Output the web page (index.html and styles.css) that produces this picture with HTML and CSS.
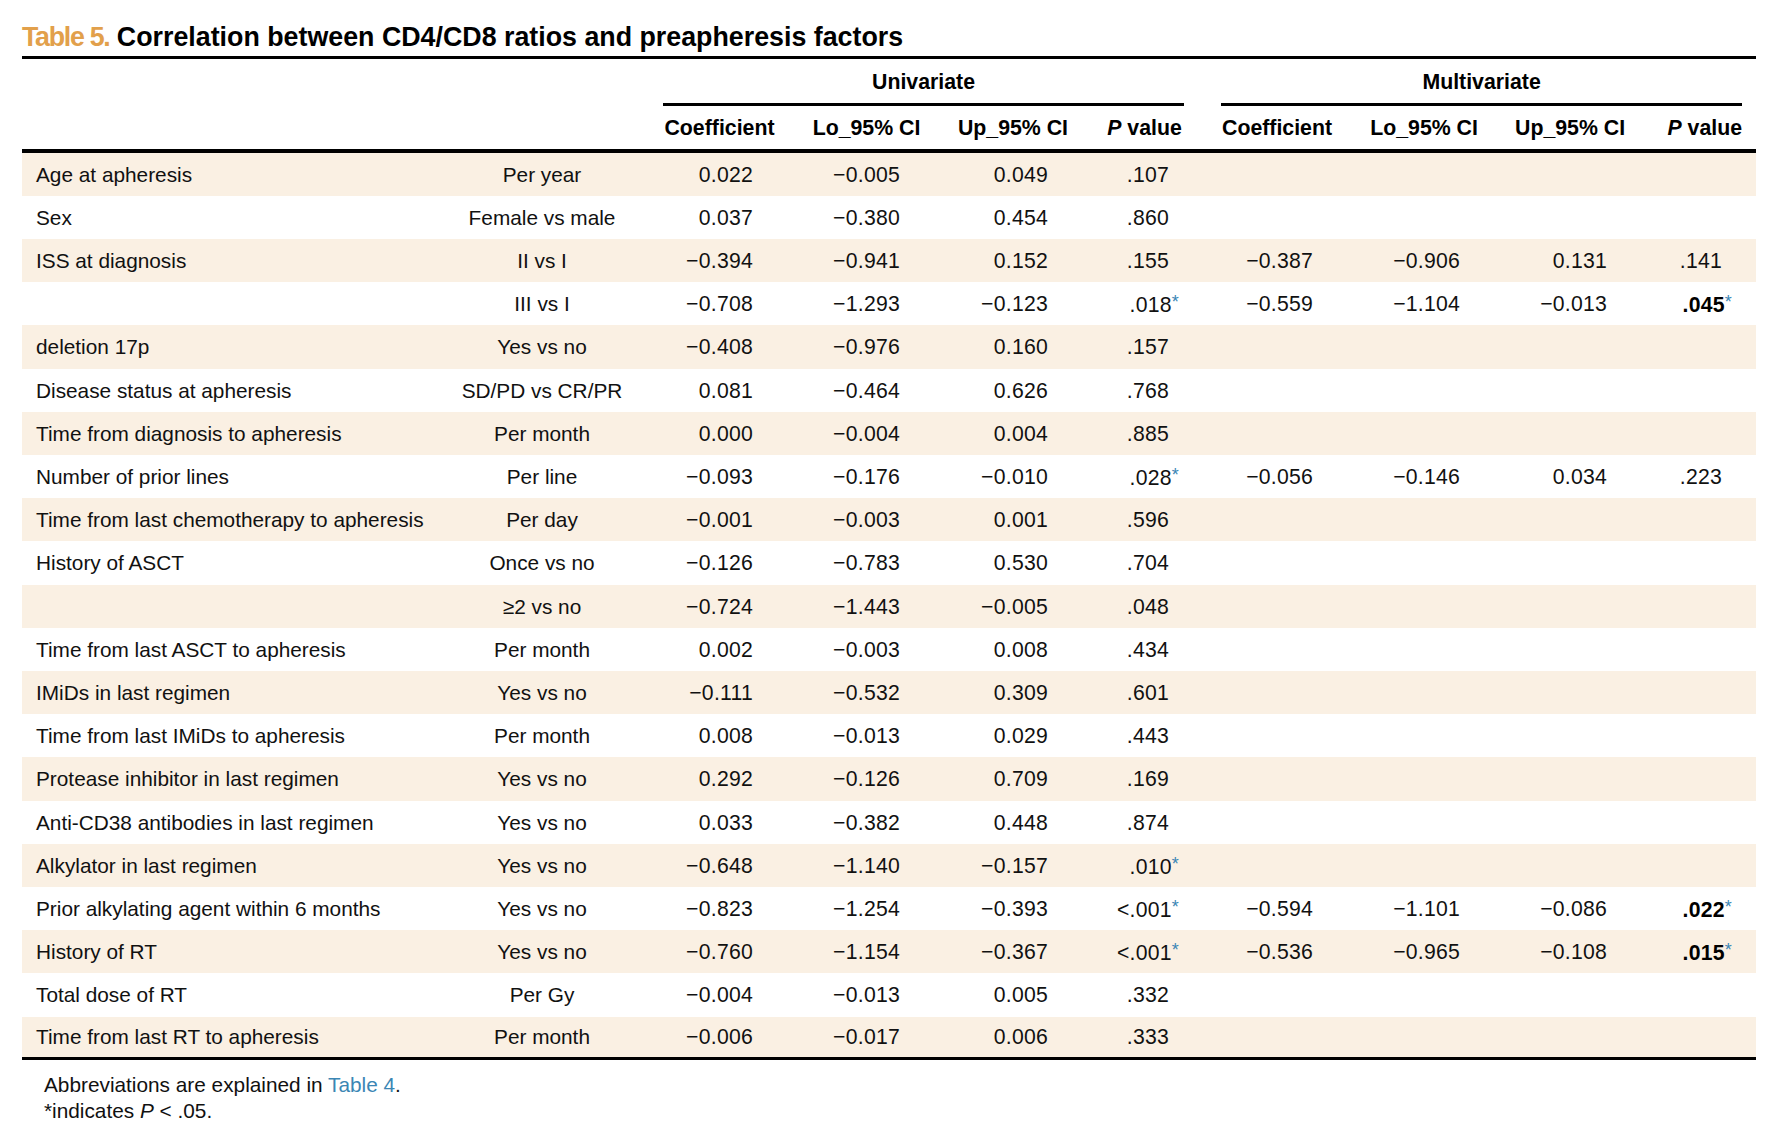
FILE: index.html
```html
<!DOCTYPE html>
<html lang="en">
<head>
<meta charset="utf-8">
<title>Table 5</title>
<link rel="stylesheet" href="styles.css">
</head>
<body>
<div class="page">
  <div class="caption"><span class="label">Table 5.</span> Correlation between CD4/CD8 ratios and preapheresis factors</div>
  <table class="data">
    <colgroup>
      <col class="w1"><col class="w2"><col class="w3"><col class="w4"><col class="w5"><col class="w6"><col class="w7"><col class="w8"><col class="w9"><col class="w10">
    </colgroup>
    <thead>
      <tr class="grp">
        <th></th><th></th>
        <th colspan="4" class="g-uni"><div class="gline">Univariate</div></th>
        <th colspan="4" class="g-multi"><div class="gline">Multivariate</div></th>
      </tr>
      <tr class="cols">
        <th></th><th></th>
        <th>Coefficient</th><th>Lo_95% CI</th><th>Up_95% CI</th><th><i>P</i> value</th>
        <th>Coefficient</th><th>Lo_95% CI</th><th>Up_95% CI</th><th class="last"><i>P</i> value</th>
      </tr>
    </thead>
    <tbody>
      <tr><td>Age at apheresis</td><td>Per year</td><td class="n3">0.022</td><td class="n4">−0.005</td><td class="n5">0.049</td><td class="n6">.107</td><td></td><td></td><td></td><td></td></tr>
      <tr><td>Sex</td><td>Female vs male</td><td class="n3">0.037</td><td class="n4">−0.380</td><td class="n5">0.454</td><td class="n6">.860</td><td></td><td></td><td></td><td></td></tr>
      <tr><td>ISS at diagnosis</td><td>II vs I</td><td class="n3">−0.394</td><td class="n4">−0.941</td><td class="n5">0.152</td><td class="n6">.155</td><td class="n7">−0.387</td><td class="n8">−0.906</td><td class="n9">0.131</td><td class="n10">.141</td></tr>
      <tr><td></td><td>III vs I</td><td class="n3">−0.708</td><td class="n4">−1.293</td><td class="n5">−0.123</td><td class="n6">.018<span class="star">*</span></td><td class="n7">−0.559</td><td class="n8">−1.104</td><td class="n9">−0.013</td><td class="n10"><b>.045</b><span class="star">*</span></td></tr>
      <tr><td>deletion 17p</td><td>Yes vs no</td><td class="n3">−0.408</td><td class="n4">−0.976</td><td class="n5">0.160</td><td class="n6">.157</td><td></td><td></td><td></td><td></td></tr>
      <tr><td>Disease status at apheresis</td><td>SD/PD vs CR/PR</td><td class="n3">0.081</td><td class="n4">−0.464</td><td class="n5">0.626</td><td class="n6">.768</td><td></td><td></td><td></td><td></td></tr>
      <tr><td>Time from diagnosis to apheresis</td><td>Per month</td><td class="n3">0.000</td><td class="n4">−0.004</td><td class="n5">0.004</td><td class="n6">.885</td><td></td><td></td><td></td><td></td></tr>
      <tr><td>Number of prior lines</td><td>Per line</td><td class="n3">−0.093</td><td class="n4">−0.176</td><td class="n5">−0.010</td><td class="n6">.028<span class="star">*</span></td><td class="n7">−0.056</td><td class="n8">−0.146</td><td class="n9">0.034</td><td class="n10">.223</td></tr>
      <tr><td>Time from last chemotherapy to apheresis</td><td>Per day</td><td class="n3">−0.001</td><td class="n4">−0.003</td><td class="n5">0.001</td><td class="n6">.596</td><td></td><td></td><td></td><td></td></tr>
      <tr><td>History of ASCT</td><td>Once vs no</td><td class="n3">−0.126</td><td class="n4">−0.783</td><td class="n5">0.530</td><td class="n6">.704</td><td></td><td></td><td></td><td></td></tr>
      <tr><td></td><td>≥2 vs no</td><td class="n3">−0.724</td><td class="n4">−1.443</td><td class="n5">−0.005</td><td class="n6">.048</td><td></td><td></td><td></td><td></td></tr>
      <tr><td>Time from last ASCT to apheresis</td><td>Per month</td><td class="n3">0.002</td><td class="n4">−0.003</td><td class="n5">0.008</td><td class="n6">.434</td><td></td><td></td><td></td><td></td></tr>
      <tr><td>IMiDs in last regimen</td><td>Yes vs no</td><td class="n3">−0.111</td><td class="n4">−0.532</td><td class="n5">0.309</td><td class="n6">.601</td><td></td><td></td><td></td><td></td></tr>
      <tr><td>Time from last IMiDs to apheresis</td><td>Per month</td><td class="n3">0.008</td><td class="n4">−0.013</td><td class="n5">0.029</td><td class="n6">.443</td><td></td><td></td><td></td><td></td></tr>
      <tr><td>Protease inhibitor in last regimen</td><td>Yes vs no</td><td class="n3">0.292</td><td class="n4">−0.126</td><td class="n5">0.709</td><td class="n6">.169</td><td></td><td></td><td></td><td></td></tr>
      <tr><td>Anti-CD38 antibodies in last regimen</td><td>Yes vs no</td><td class="n3">0.033</td><td class="n4">−0.382</td><td class="n5">0.448</td><td class="n6">.874</td><td></td><td></td><td></td><td></td></tr>
      <tr><td>Alkylator in last regimen</td><td>Yes vs no</td><td class="n3">−0.648</td><td class="n4">−1.140</td><td class="n5">−0.157</td><td class="n6">.010<span class="star">*</span></td><td></td><td></td><td></td><td></td></tr>
      <tr><td>Prior alkylating agent within 6 months</td><td>Yes vs no</td><td class="n3">−0.823</td><td class="n4">−1.254</td><td class="n5">−0.393</td><td class="n6">&lt;.001<span class="star">*</span></td><td class="n7">−0.594</td><td class="n8">−1.101</td><td class="n9">−0.086</td><td class="n10"><b>.022</b><span class="star">*</span></td></tr>
      <tr><td>History of RT</td><td>Yes vs no</td><td class="n3">−0.760</td><td class="n4">−1.154</td><td class="n5">−0.367</td><td class="n6">&lt;.001<span class="star">*</span></td><td class="n7">−0.536</td><td class="n8">−0.965</td><td class="n9">−0.108</td><td class="n10"><b>.015</b><span class="star">*</span></td></tr>
      <tr><td>Total dose of RT</td><td>Per Gy</td><td class="n3">−0.004</td><td class="n4">−0.013</td><td class="n5">0.005</td><td class="n6">.332</td><td></td><td></td><td></td><td></td></tr>
      <tr><td>Time from last RT to apheresis</td><td>Per month</td><td class="n3">−0.006</td><td class="n4">−0.017</td><td class="n5">0.006</td><td class="n6">.333</td><td></td><td></td><td></td><td></td></tr>
    </tbody>
  </table>
  <div class="notes">
    <div>Abbreviations are explained in <span class="link">Table 4</span>.</div>
    <div>*indicates <i>P</i> &lt; .05.</div>
  </div>
</div>
</body>
</html>
```

FILE: styles.css
```css
html, body {
  margin: 0;
  padding: 0;
  background: #ffffff;
}
body {
  font-family: "Liberation Sans", Arial, Helvetica, sans-serif;
  color: #111111;
}
.page {
  width: 1734px;
  padding: 23px 20px 0 22px;
}
.caption {
  font-size: 26.8px;
  font-weight: 700;
  line-height: 28px;
  padding-bottom: 5px;
  border-bottom: 3.5px solid #000;
  color: #000;
  white-space: nowrap;
}
.caption .label {
  color: #e2a04b;
  letter-spacing: -1.3px;
}
table.data {
  width: 1734px;
  table-layout: fixed;
  border-collapse: separate;
  border-spacing: 0;
  font-size: 20.8px;
}
.w1 { width: 417px; }
.w2 { width: 206px; }
.w3 { width: 149px; }
.w4 { width: 145px; }
.w5 { width: 148px; }
.w6 { width: 115px; }
.w7 { width: 150px; }
.w8 { width: 144px; }
.w9 { width: 148px; }
.w10 { width: 112px; }

thead th {
  font-weight: 700;
  font-size: 21.3px;
  color: #000;
  white-space: nowrap;
  text-align: center;
  padding: 0;
}
thead th i { font-style: italic; }
.grp th {
  padding-top: 11px;
  vertical-align: bottom;
}
.g-uni { padding-left: 18px !important; padding-right: 18px !important; }
.g-multi { padding-left: 19px !important; padding-right: 14px !important; }
.gline {
  line-height: 24px;
  padding-bottom: 9px;
  border-bottom: 3.5px solid #000;
}
.cols th {
  line-height: 24px;
  padding-top: 10px;
  padding-bottom: 9px;
  border-bottom: 4.5px solid #000;
}
.cols th.last {
  text-align: right;
  padding-right: 14px;
}
tbody tr {
  height: 43px;
}
tbody tr:nth-child(5n) {
  height: 44px;
}
tbody tr:nth-child(odd) td {
  background: #faf0e3;
}
tbody tr:last-child td {
  border-bottom: 3.5px solid #000;
}
tbody td {
  padding: 0;
  line-height: 24px;
  white-space: nowrap;
  vertical-align: middle;
}
tbody td:first-child {
  padding-left: 14px;
  text-align: left;
}
tbody td:nth-child(2) {
  text-align: center;
}
.n3, .n4, .n5, .n6, .n7, .n8, .n9, .n10 {
  text-align: right;
  font-size: 21.2px;
  letter-spacing: 0.25px;
}
.n3 { padding-right: 41px !important; }
.n4 { padding-right: 39px !important; }
.n5 { padding-right: 39px !important; }
.n6 { padding-right: 33px !important; }
.n7 { padding-right: 39px !important; }
.n8 { padding-right: 36px !important; }
.n9 { padding-right: 37px !important; }
.n10 { padding-right: 34px !important; }
.n10 b { font-weight: 700; color: #000; }
.star {
  color: #3a86b5;
  font-size: 18px;
  vertical-align: 4px;
  margin-right: -10px;
}
.notes {
  padding-left: 22px;
  padding-top: 12px;
  font-size: 20.8px;
  line-height: 26px;
  color: #111;
}
.link {
  color: #3b86b4;
}
```
